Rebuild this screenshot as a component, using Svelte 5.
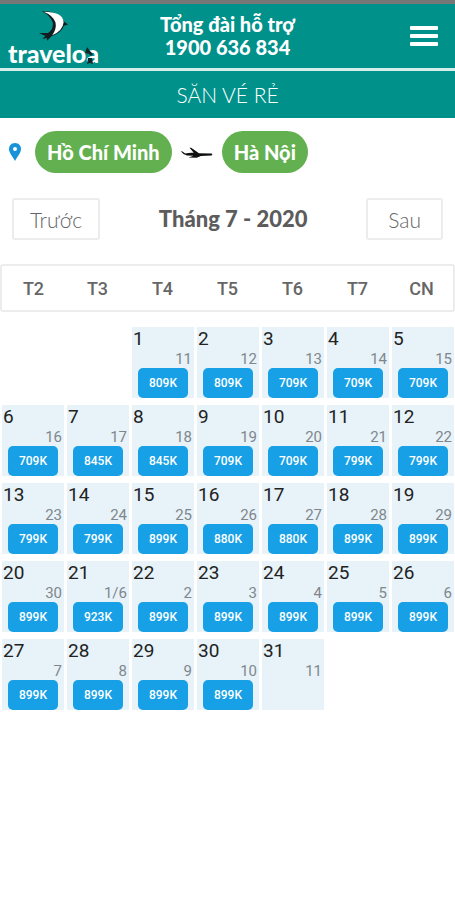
<script lang="ts">
    const weekdays = ["T2", "T3", "T4", "T5", "T6", "T7", "CN"];

    const firstColumn = 2;
    const lunar = [
        "11", "12", "13", "14", "15",
        "16", "17", "18", "19", "20", "21", "22",
        "23", "24", "25", "26", "27", "28", "29",
        "30", "1/6", "2", "3", "4", "5", "6",
        "7", "8", "9", "10", "11",
    ];
    const prices = [
        809, 809, 709, 709, 709,
        709, 845, 845, 709, 709, 799, 799,
        799, 799, 899, 880, 880, 899, 899,
        899, 923, 899, 899, 899, 899, 899,
        899, 899, 899, 899, null,
    ];

    type Day = { date: number; lunar: string; price: number | null };

    const cells: (Day | null)[] = [
        ...Array(firstColumn).fill(null),
        ...lunar.map((l, i) => ({ date: i + 1, lunar: l, price: prices[i] })),
    ];
    while (cells.length % 7) cells.push(null);

    const weeks: (Day | null)[][] = [];
    for (let i = 0; i < cells.length; i += 7) weeks.push(cells.slice(i, i + 7));
</script>

<div class="page">
    <header class="top">
        <a class="logo" href="#home">
            <svg viewBox="120 30 95 92" width="32" height="31" aria-hidden="true">
                <path d="M132 34 Q150 33 166 38 Q190 46 197 64 L209 73 L197 77 Q190 98 160 108 L147 121 L146 113 L133 116 L142 107 L123 98 L150 98 Q166 88 164 68 Q158 48 132 34Z" fill="#101c20" />
                <path d="M137 35 Q194 35 196 66 Q194 91 162 105 Q176 86 172 67 Q165 46 137 35Z" fill="#fff" />
            </svg>
            <span class="logo-text">
                traveloa
                <svg class="mark" viewBox="0 0 12 18" width="12" height="18" aria-hidden="true">
                    <path d="M3 0 L6 4 L9 7 L7 9 L5 7 L1 6Z M4 11 L8 11 L9 17 L6 16 L3 17Z" fill="#10282b" />
                </svg>
            </span>
        </a>
        <div class="hotline">
            <span>Tổng đài hỗ trợ</span>
            <span>1900 636 834</span>
        </div>
        <button class="menu" aria-label="Menu">
            <span></span>
            <span></span>
            <span></span>
        </button>
    </header>

    <h1>SĂN VÉ RẺ</h1>

    <div class="route">
        <svg class="pin" viewBox="0 0 14 20" width="14" height="20" aria-hidden="true">
            <path d="M7 1 C3 1 1 4 1 7 C1 11 5 15 7 19 C9 15 13 11 13 7 C13 4 11 1 7 1Z M7 5 A2 2 0 1 1 7 9 A2 2 0 1 1 7 5Z" fill="#1993d8" fill-rule="evenodd" />
        </svg>
        <button class="city">Hồ Chí Minh</button>
        <svg class="plane" viewBox="540 75 102 40" width="34" height="13" aria-hidden="true">
            <path d="M541 91 L546 92 L555 98 Q568 95 581 96 L568 80 L573 80 L597 97 L635 98 Q641 100 636 104 L603 106 L590 111 L565 110 L580 105 L560 104 Q548 101 541 91Z" fill="#111" />
        </svg>
        <button class="city">Hà Nội</button>
    </div>

    <div class="month">
        <button class="nav">Trước</button>
        <h2>Tháng 7 - 2020</h2>
        <button class="nav">Sau</button>
    </div>

    <table>
        <thead>
            <tr>
                {#each weekdays as name}
                    <th scope="col">{name}</th>
                {/each}
            </tr>
        </thead>
        <tbody>
            {#each weeks as week}
                <tr>
                    {#each week as day}
                        <td>
                            {#if day}
                                <div class="day">
                                    <span class="date">{day.date}</span>
                                    <span class="lunar">{day.lunar}</span>
                                    {#if day.price}
                                        <button class="price">{day.price}K</button>
                                    {/if}
                                </div>
                            {/if}
                        </td>
                    {/each}
                </tr>
            {/each}
        </tbody>
    </table>
</div>

<style>
    :global(body) {
        margin: 0;
        background: #fff;
    }

    .page {
        font-family: Lato, "Noto Sans", sans-serif;
        color: #5c5c5c;
    }

    button {
        font-family: inherit;
        margin: 0;
        padding: 0;
        border: 0;
        cursor: pointer;
    }

    .top {
        display: grid;
        grid-template-columns: 1fr auto 1fr;
        align-items: start;
        height: 64px;
        background: #00918b;
        border-top: 4px solid #777;
        border-bottom: 3px solid #d5eeec;
        color: #fff;
    }

    .logo {
        display: flex;
        flex-direction: column;
        width: 92px;
        padding: 6px 0 0 8px;
        color: #fff;
        text-decoration: none;
    }

    .logo > svg {
        align-self: center;
    }

    .logo-text {
        position: relative;
        font-size: 25px;
        line-height: 24px;
        font-weight: 900;
    }

    .mark {
        position: absolute;
        right: 4px;
        bottom: 0;
    }

    .hotline {
        display: flex;
        flex-direction: column;
        align-items: center;
        padding-top: 9px;
        font-size: 20px;
        line-height: 23px;
        font-weight: 900;
    }

    .menu {
        display: flex;
        flex-direction: column;
        gap: 4px;
        justify-self: end;
        margin: 22px 17px 0 0;
        background: none;
    }

    .menu span {
        width: 28px;
        height: 4px;
        border-radius: 1px;
        background: #fff;
    }

    h1 {
        margin: 0;
        background: #00918b;
        color: #fff;
        font-size: 21px;
        line-height: 47px;
        font-weight: 300;
        text-align: center;
    }

    .route {
        display: flex;
        align-items: center;
        gap: 8px;
        padding: 13px 8px 0;
    }

    .pin {
        margin-right: 5px;
    }

    .city {
        height: 42px;
        padding: 0 12px;
        border-radius: 21px;
        background: #62b04f;
        color: #fff;
        font-size: 20px;
        font-weight: 900;
    }

    .month {
        display: flex;
        align-items: center;
        justify-content: space-between;
        padding: 25px 12px 24px;
    }

    .nav {
        height: 42px;
        padding: 0 16px;
        border: 2px solid #ececec;
        border-radius: 3px;
        background: #fff;
        color: #666;
        font-size: 21px;
        font-weight: 300;
    }

    .nav:last-child {
        padding: 0 20px;
    }

    h2 {
        margin: 0;
        font-size: 22px;
        line-height: 24px;
        font-weight: 900;
    }

    table {
        width: 100%;
        table-layout: fixed;
        border-spacing: 0;
        font-family: Roboto, sans-serif;
    }

    th {
        height: 44px;
        padding: 0;
        border: solid #ececec;
        border-width: 2px 0;
        font-size: 18px;
        font-weight: 500;
        color: #666;
    }

    th:first-child {
        border-left-width: 2px;
        border-radius: 3px 0 0 3px;
    }

    th:last-child {
        border-right-width: 2px;
        border-radius: 0 3px 3px 0;
    }

    td {
        padding: 7px 1px 0 2px;
        vertical-align: top;
    }

    tbody tr:first-child td {
        padding-top: 15px;
    }

    .day {
        display: flex;
        flex-direction: column;
        height: 71px;
        background: #e7f2f9;
    }

    .date {
        padding-left: 1px;
        font-size: 19px;
        line-height: 23px;
        color: #222;
    }

    .lunar {
        padding-right: 2px;
        font-size: 15px;
        line-height: 18px;
        text-align: right;
        color: #80878c;
    }

    .price {
        height: 30px;
        margin: 0 6px;
        border-radius: 5px;
        background: #18a0e6;
        color: #fff;
        font-size: 12px;
        font-weight: 500;
    }
</style>
